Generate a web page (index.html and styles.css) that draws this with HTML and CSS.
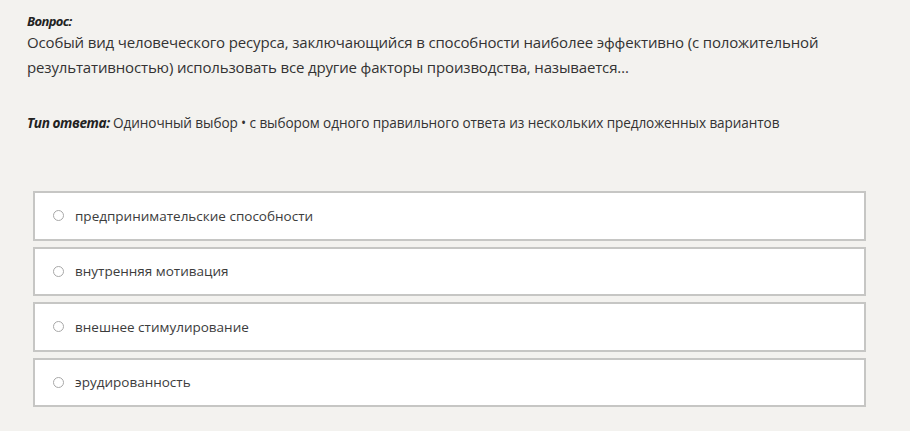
FILE: index.html
```html
<!DOCTYPE html>
<html lang="ru">
<head>
    <meta charset="UTF-8">
    <meta name="viewport" content="width=device-width, initial-scale=1.0">
    <title>Вопрос</title>
    <link rel="stylesheet" href="styles.css">
</head>
<body>
    <div class="question">
        <div class="question-label">Вопрос:</div>
        <p class="question-text">Особый вид человеческого ресурса, заключающийся в способности наиболее эффективно (с положительной результативностью) использовать все другие факторы производства, называется…</p>

        <p class="answer-type"><em>Тип ответа:</em> Одиночный выбор • с выбором одного правильного ответа из нескольких предложенных вариантов</p>

        <!-- Варианты ответа -->
        <div class="options">
            <label class="option">
                <span class="radio"></span>
                <span>предпринимательские способности</span>
            </label>
            <label class="option">
                <span class="radio"></span>
                <span>внутренняя мотивация</span>
            </label>
            <label class="option">
                <span class="radio"></span>
                <span>внешнее стимулирование</span>
            </label>
            <label class="option">
                <span class="radio"></span>
                <span>эрудированность</span>
            </label>
        </div>
    </div>
</body>
</html>
```

FILE: styles.css
```css
* {
    margin: 0;
    padding: 0;
    box-sizing: border-box;
}

body {
    font-family: "Open Sans", "Noto Sans", sans-serif;
    background: #f3f2ef;
    color: #333;
}

.question {
    padding: 12px 44px 0 27px;
}

.question-label {
    font-size: 13px;
    font-weight: 700;
    font-style: italic;
    letter-spacing: -0.6px;
    line-height: 18px;
    color: #222;
}

.question-text {
    font-size: 15px;
    line-height: 25px;
    letter-spacing: -0.15px;
    color: #333;
}

.answer-type {
    margin-top: 34px;
    font-size: 13.6px;
    line-height: 18px;
    letter-spacing: -0.1px;
    color: #333;
}

.answer-type em {
    font-weight: 700;
    letter-spacing: -0.4px;
    color: #222;
}

.options {
    margin-top: 59px;
    margin-left: 6px;
    display: flex;
    flex-direction: column;
    gap: 6px;
}

.option {
    display: flex;
    align-items: center;
    gap: 11px;
    height: 49.5px;
    padding-left: 18px;
    background: #fff;
    border: 2px solid #c6c6c4;
    font-size: 13.5px;
    color: #3c3c3c;
    cursor: pointer;
}

.radio {
    width: 11px;
    height: 11px;
    border: 1.5px solid #a8a8a8;
    border-radius: 50%;
    flex-shrink: 0;
}
```
